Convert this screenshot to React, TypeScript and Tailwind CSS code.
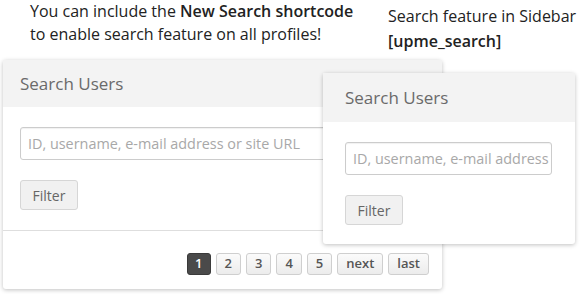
import React from 'react';

const font = { fontFamily: '"Open Sans", "Noto Sans", sans-serif' };

const PageButton = ({ label, active = false }: { label: string; active?: boolean }) => (
  <span
    className={`flex h-[22px] items-center justify-center rounded-[3px] border text-[13px] font-semibold ${
      active
        ? 'border-[#3a3a3a] bg-[#4a4a4a] px-[7px] text-white'
        : 'border-[#cfcfcf] bg-gradient-to-b from-[#fbfbfb] to-[#ececec] px-[8px] text-[#555]'
    }`}
  >
    {label}
  </span>
);

const SearchPanel = ({ wide }: { wide: boolean }) => (
  <div className="rounded-[3px] bg-white shadow-[0_1px_4px_rgba(0,0,0,0.25)]">
    <div
      className={`flex items-center bg-[#f3f3f3] text-[17px] text-[#6a6a6a] ${
        wide ? 'h-[47px] px-[17px]' : 'h-[49px] px-[22px]'
      }`}
    >
      Search Users
    </div>
    <div className={wide ? 'px-[17px] pt-[20px]' : 'px-[22px] pt-[20px]'}>
      <div
        className={`flex h-[33px] items-center overflow-hidden whitespace-nowrap rounded-[3px] border border-[#cccccc] px-[7px] text-[14.4px] text-[#a8a8a8] shadow-[inset_0_1px_1px_rgba(0,0,0,0.06)] ${
          wide ? 'w-[400px]' : 'w-[207px]'
        }`}
      >
        ID, username, e-mail address or site URL
      </div>
      <div className="pt-[20px]">
        <span className="inline-flex h-[30px] w-[58px] items-center justify-center rounded-[3px] border border-[#d6d6d6] bg-[#f1f1f1] text-[14px] text-[#666]">
          Filter
        </span>
      </div>
    </div>
    {wide ? (
      <>
        <div className="mt-[20px] h-px bg-[#dedede]" />
        <div className="flex justify-end gap-[5px] px-[13px] pb-[14px] pt-[22px]">
          <PageButton label="1" active />
          <PageButton label="2" />
          <PageButton label="3" />
          <PageButton label="4" />
          <PageButton label="5" />
          <PageButton label="next" />
          <PageButton label="last" />
        </div>
      </>
    ) : (
      <div className="h-[19px]" />
    )}
  </div>
);

export default function App() {
  return (
    <div className="relative h-[294px] w-[580px] overflow-hidden bg-white text-[#222]" style={font}>
      <p className="pl-[30px] text-[16px] leading-[23px]">
        You can include the <b className="font-semibold">New Search shortcode</b>
        <br />
        to enable search feature on all profiles!
      </p>
      <div className="mt-[14px] w-[442px] pl-[3px]">
        <SearchPanel wide />
      </div>
      <div className="absolute left-[323px] top-[4px] w-[252px]">
        <p className="whitespace-nowrap pl-[65px] text-[16px] leading-[25px]">
          Search feature in Sidebar
          <br />
          <b className="font-semibold">[upme_search]</b>
        </p>
        <div className="mt-[19px]">
          <SearchPanel wide={false} />
        </div>
      </div>
    </div>
  );
}
